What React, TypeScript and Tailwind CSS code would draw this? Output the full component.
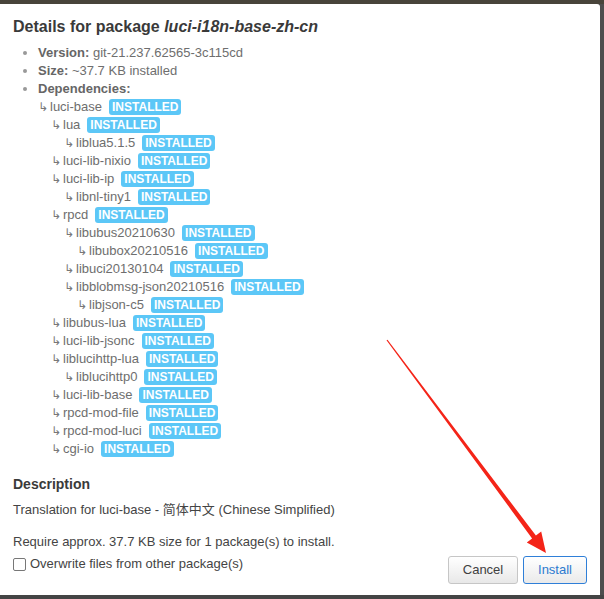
const deps: [number, string][] = [
  [0, 'luci-base'],
  [1, 'lua'],
  [2, 'liblua5.1.5'],
  [1, 'luci-lib-nixio'],
  [1, 'luci-lib-ip'],
  [2, 'libnl-tiny1'],
  [1, 'rpcd'],
  [2, 'libubus20210630'],
  [3, 'libubox20210516'],
  [2, 'libuci20130104'],
  [2, 'libblobmsg-json20210516'],
  [3, 'libjson-c5'],
  [1, 'libubus-lua'],
  [1, 'luci-lib-jsonc'],
  [1, 'liblucihttp-lua'],
  [2, 'liblucihttp0'],
  [1, 'luci-lib-base'],
  [1, 'rpcd-mod-file'],
  [1, 'rpcd-mod-luci'],
  [1, 'cgi-io'],
];

const indent = ['pl-0', 'pl-[13px]', 'pl-[26px]', 'pl-[39px]'];

function Badge() {
  return (
    <span className="ml-[7px] inline-flex h-[16px] items-center rounded-[3px] bg-[#5cc7f7] px-[3px] text-[12px] font-bold leading-none text-white">
      INSTALLED
    </span>
  );
}

export default function App() {
  return (
    <div className="relative flex h-[599px] w-[604px] flex-col overflow-hidden bg-[#444444] font-['Liberation_Sans','Noto_Sans_CJK_SC',sans-serif]">
      <div className="h-[4px] bg-[#48443a]"></div>
      <div className="flex h-[591px]">
        {/* Modal */}
        <div className="flex w-[600px] flex-col rounded-tr-[3px] bg-white px-[13px] pt-[13px]">
          <h4 className="text-[16px] font-bold leading-[20px] text-[#3a3a3a]">
            Details for package <em className="italic">luci-i18n-base-zh-cn</em>
          </h4>

          <ul className="mt-[7px] list-disc pl-[25px] text-[13px] leading-[18px] text-[#6e6e6e] marker:text-[#999]">
            <li>
              <strong className="font-bold text-[#666]">Version:</strong> git-21.237.62565-3c115cd
            </li>
            <li>
              <strong className="font-bold text-[#666]">Size:</strong> ~37.7 KB installed
            </li>
            <li>
              <strong className="font-bold text-[#666]">Dependencies:</strong>
              <div>
                {deps.map(([level, name], i) => (
                  <div key={i} className={`flex h-[18px] items-center ${indent[level]}`}>
                    <span className="inline-block w-[12px] font-['DejaVu_Sans',sans-serif] text-[12px] text-[#777]">↳</span>
                    <span>{name}</span>
                    <Badge />
                  </div>
                ))}
              </div>
            </li>
          </ul>

          <h5 className="mt-[16px] text-[14px] font-bold leading-[20px] text-[#3a3a3a]">Description</h5>
          <p className="mt-[7px] text-[13px] leading-[18px] text-[#444]">
            Translation for luci-base - 简体中文 (Chinese Simplified)
          </p>
          <p className="mt-[14px] text-[13px] leading-[18px] text-[#444]">
            Require approx. 37.7 KB size for 1 package(s) to install.
          </p>

          <div className="flex items-start justify-between">
            <label className="mt-[4px] flex h-[18px] items-center text-[13px] text-[#444]">
              <span className="mr-[4px] inline-block h-[13px] w-[13px] rounded-[2px] border border-[#777] bg-white"></span>
              Overwrite files from other package(s)
            </label>
            <div className="mt-[5px] flex gap-[5px]">
              <button className="h-[28px] w-[70px] rounded-[3px] border border-[#c6c6c6] bg-gradient-to-b from-white to-[#e8e8e8] text-[13px] text-[#404040]">
                Cancel
              </button>
              <button className="h-[28px] w-[64px] rounded-[3px] border border-[#2f7fd8] bg-gradient-to-b from-white to-[#eaeaea] text-[13px] text-[#2d7ad0]">
                Install
              </button>
            </div>
          </div>
        </div>
        <div className="flex-1 bg-[#4e4e4e]"></div>
      </div>

      {/* red annotation arrow */}
      <svg className="pointer-events-none absolute left-0 top-0" width="604" height="599" viewBox="0 0 604 599">
        <polygon
          points="387.5,339.7 535.9,535.6 541.2,531.6 546,553 526.8,542.4 532.1,538.4 386.5,340.3"
          fill="#f42418"
        />
      </svg>
    </div>
  );
}
